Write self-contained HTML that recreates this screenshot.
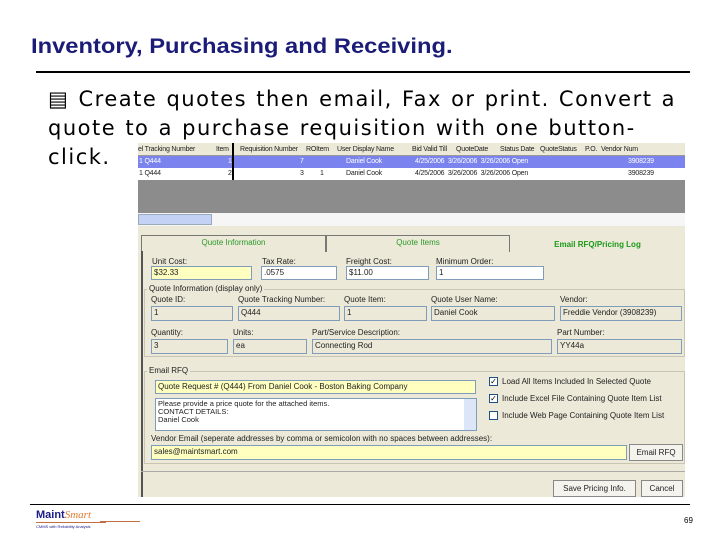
<!DOCTYPE html>
<html><head><meta charset="utf-8"><style>
*{margin:0;padding:0;box-sizing:border-box}
body{width:720px;height:540px;background:#fff;position:relative;overflow:hidden;font-family:"Liberation Sans",sans-serif}
.a{position:absolute}
.t{font-size:8px;color:#222;white-space:nowrap;line-height:10px}
.h{font-size:7px;letter-spacing:-0.2px}
.in{position:absolute;background:#fff;border:1px solid #7f9db9;font-size:8px;line-height:12px;padding-left:2px;color:#222;white-space:nowrap;overflow:hidden}
.y{background:#ffffc0}
.g{background:#ece9d8}
.btn{position:absolute;background:#f4f3ee;border:1px solid #888;font-size:8px;text-align:center;line-height:15px;color:#222}
.cb{position:absolute;width:9px;height:9px;border:1px solid #1c5180;background:#fff;font-size:8px;line-height:7px;text-align:center}
</style></head><body>
<div class="a" style="left:31px;top:35px;font-size:21px;font-weight:bold;color:#1b1b78;transform:scaleX(1.13);transform-origin:0 0;white-space:nowrap">Inventory, Purchasing and Receiving.</div>
<div class="a" style="left:36px;top:71px;width:654px;height:2px;background:#000"></div>
<div class="a" style="left:48px;top:85px;font-family:'DejaVu Sans',sans-serif;font-size:21px;line-height:29px;color:#000;white-space:nowrap;letter-spacing:1.5px;word-spacing:1px">▤ Create quotes then email, Fax or print. Convert a<br>quote to a purchase requisition with one button-<br>click.</div>

<!-- screenshot -->
<div class="a" style="left:138px;top:143px;width:547px;height:354px;background:#ece9d8;overflow:hidden">
 <div class="a" style="left:0;top:0;width:547px;height:13px;background:#ece9d8;border-bottom:1px solid #999"></div>
 <div class="a" style="left:0;top:13px;width:547px;height:12px;background:#7b84ee"></div>
 <div class="a" style="left:0;top:25px;width:547px;height:12px;background:#fff"></div>
 <div class="a" style="left:0;top:37px;width:547px;height:33px;background:#8c8c8c"></div>
 <div class="a" style="left:0;top:70px;width:547px;height:13px;background:#f6f6f6"></div>
 <div class="a" style="left:0;top:71px;width:74px;height:11px;background:#c4d3f5;border:1px solid #9ab"></div>
 <div class="a" style="left:94px;top:0;width:2px;height:37px;background:#000"></div>
 <div class="t h a" style="left:0;top:2px">el Tracking Number</div>
 <div class="t h a" style="left:78px;top:2px">Item</div>
 <div class="t h a" style="left:102px;top:2px">Requisition Number</div>
 <div class="t h a" style="left:168px;top:2px">ROItem</div>
 <div class="t h a" style="left:199px;top:2px">User Display Name</div>
 <div class="t h a" style="left:274px;top:2px">Bid Valid Till</div>
 <div class="t h a" style="left:318px;top:2px">QuoteDate</div>
 <div class="t h a" style="left:362px;top:2px">Status Date</div>
 <div class="t h a" style="left:402px;top:2px">QuoteStatus</div>
 <div class="t h a" style="left:447px;top:2px">P.O.</div>
 <div class="t h a" style="left:463px;top:2px">Vendor Num</div>
 <div class="t h a" style="left:1px;top:14px;color:#fff">1 Q444</div>
 <div class="t h a" style="left:90px;top:14px;color:#fff">1</div>
 <div class="t h a" style="left:162px;top:14px;color:#fff">7</div>
 <div class="t h a" style="left:208px;top:14px;color:#fff">Daniel Cook</div>
 <div class="t h a" style="left:277px;top:14px;color:#fff">4/25/2006 &nbsp;3/26/2006 &nbsp;3/26/2006 Open</div>
 <div class="t h a" style="left:490px;top:14px;color:#fff">3908239</div>
 <div class="t h a" style="left:1px;top:26px">1 Q444</div>
 <div class="t h a" style="left:90px;top:26px">2</div>
 <div class="t h a" style="left:162px;top:26px">3</div>
 <div class="t h a" style="left:182px;top:26px">1</div>
 <div class="t h a" style="left:208px;top:26px">Daniel Cook</div>
 <div class="t h a" style="left:277px;top:26px">4/25/2006 &nbsp;3/26/2006 &nbsp;3/26/2006 Open</div>
 <div class="t h a" style="left:490px;top:26px">3908239</div>
 <!-- tabs -->
 <div class="a" style="left:3px;top:92px;width:185px;height:17px;border:1px solid #777;border-bottom:none;background:#ece9d8"></div>
 <div class="t a" style="left:3px;top:95px;width:185px;text-align:center;color:#2a9a2a">Quote Information</div>
 <div class="a" style="left:188px;top:92px;width:184px;height:17px;border:1px solid #777;border-bottom:none"></div>
 <div class="t a" style="left:188px;top:95px;width:184px;text-align:center;color:#2a9a2a">Quote Items</div>
 <div class="t a" style="left:372px;top:97px;width:175px;text-align:center;color:#1a9a1a;font-weight:bold">Email RFQ/Pricing Log</div>
 <div class="a" style="left:3px;top:108px;width:2px;height:250px;background:#555"></div>
 <!-- pricing -->
 <div class="t a" style="left:14px;top:114px">Unit Cost:</div>
 <div class="t a" style="left:124px;top:114px">Tax Rate:</div>
 <div class="t a" style="left:208px;top:114px">Freight Cost:</div>
 <div class="t a" style="left:298px;top:114px">Minimum Order:</div>
 <div class="in y" style="left:13px;top:123px;width:101px;height:14px">$32.33</div>
 <div class="in" style="left:123px;top:123px;width:76px;height:14px">.0575</div>
 <div class="in" style="left:208px;top:123px;width:83px;height:14px">$11.00</div>
 <div class="in" style="left:298px;top:123px;width:108px;height:14px">1</div>
 <div class="a" style="left:6px;top:146px;width:541px;height:68px;border:1px solid #c8c5b5"></div>
 <div class="t a g" style="left:9px;top:141px;padding:0 2px">Quote Information (display only)</div>
 <div class="t a" style="left:13px;top:152px">Quote ID:</div>
 <div class="t a" style="left:100px;top:152px">Quote Tracking Number:</div>
 <div class="t a" style="left:206px;top:152px">Quote Item:</div>
 <div class="t a" style="left:293px;top:152px">Quote User Name:</div>
 <div class="t a" style="left:422px;top:152px">Vendor:</div>
 <div class="in g" style="left:13px;top:163px;width:82px;height:15px">1</div>
 <div class="in g" style="left:100px;top:163px;width:102px;height:15px">Q444</div>
 <div class="in g" style="left:206px;top:163px;width:83px;height:15px">1</div>
 <div class="in g" style="left:293px;top:163px;width:124px;height:15px">Daniel Cook</div>
 <div class="in g" style="left:422px;top:163px;width:122px;height:15px">Freddie Vendor (3908239)</div>
 <div class="t a" style="left:13px;top:185px">Quantity:</div>
 <div class="t a" style="left:95px;top:185px">Units:</div>
 <div class="t a" style="left:174px;top:185px">Part/Service Description:</div>
 <div class="t a" style="left:419px;top:185px">Part Number:</div>
 <div class="in g" style="left:13px;top:196px;width:77px;height:15px">3</div>
 <div class="in g" style="left:95px;top:196px;width:74px;height:15px">ea</div>
 <div class="in g" style="left:174px;top:196px;width:240px;height:15px">Connecting Rod</div>
 <div class="in g" style="left:419px;top:196px;width:125px;height:15px">YY44a</div>
 <!-- email -->
 <div class="a" style="left:6px;top:228px;width:541px;height:93px;border:1px solid #c8c5b5"></div>
 <div class="t a g" style="left:9px;top:223px;padding:0 2px">Email RFQ</div>
 <div class="in y" style="left:17px;top:237px;width:321px;height:14px">Quote Request # (Q444) From Daniel Cook - Boston Baking Company</div>
 <div class="in" style="left:17px;top:255px;width:322px;height:33px;line-height:8px;font-size:7.5px;padding-top:1px">Please provide a price quote for the attached items.<br>CONTACT DETAILS:<br>Daniel Cook</div>
 <div class="a" style="left:326px;top:256px;width:12px;height:31px;background:#dde6f8"></div>
 <div class="cb" style="left:351px;top:234px">✓</div>
 <div class="t a" style="left:364px;top:234px">Load All Items Included In Selected Quote</div>
 <div class="cb" style="left:351px;top:251px">✓</div>
 <div class="t a" style="left:364px;top:251px">Include Excel File Containing Quote Item List</div>
 <div class="cb" style="left:351px;top:268px"></div>
 <div class="t a" style="left:364px;top:268px">Include Web Page Containing Quote Item List</div>
 <div class="t a" style="left:13px;top:291px">Vendor Email (seperate addresses by comma or semicolon with no spaces between addresses):</div>
 <div class="in y" style="left:13px;top:302px;width:476px;height:15px">sales@maintsmart.com</div>
 <div class="btn" style="left:491px;top:301px;width:54px;height:17px">Email RFQ</div>
 <div class="a" style="left:3px;top:328px;width:544px;height:1px;background:#aaa"></div>
 <div class="btn" style="left:415px;top:337px;width:83px;height:17px">Save Pricing Info.</div>
 <div class="btn" style="left:503px;top:337px;width:42px;height:17px">Cancel</div>
</div>

<div class="a" style="left:30px;top:504px;width:660px;height:1px;background:#000"></div>
<div class="a" style="left:36px;top:509px;font-size:11px;font-weight:bold;color:#1b1b8a">Maint<span style="color:#e07a30;font-style:italic;font-weight:normal;font-family:'Liberation Serif',serif">Smart</span></div>
<div class="a" style="left:36px;top:522px;width:70px;height:1px;background:#c07040"></div>
<div class="a" style="left:100px;top:521px;width:40px;height:1px;background:#c07040"></div>
<div class="a" style="left:36px;top:524px;font-size:4px;color:#1b1b8a">CMMS with Reliability Analysis</div>
<div class="a" style="left:684px;top:516px;font-size:8px">69</div>
</body></html>
